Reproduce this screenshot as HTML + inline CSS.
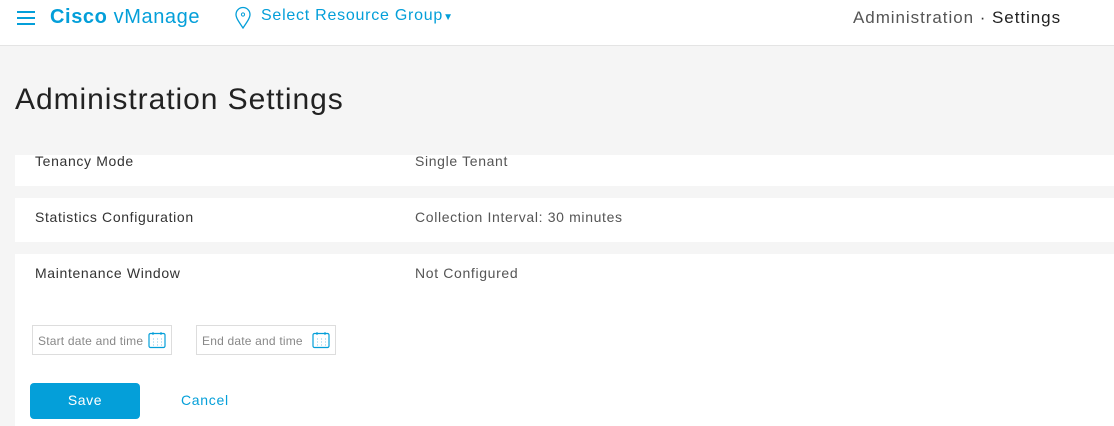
<!DOCTYPE html>
<html><head><style>
*{margin:0;padding:0;box-sizing:border-box}
body{width:1114px;height:426px;overflow:hidden;background:#f5f5f5;font-family:"Liberation Sans",sans-serif;position:relative}
.hdr{position:absolute;left:0;top:0;width:1114px;height:46px;background:#fff;border-bottom:1px solid #e4e4e4}
.a{position:absolute;white-space:nowrap}
.card{position:absolute;left:15px;width:1099px;background:#fff}
.lbl{font-size:14px;color:#333;letter-spacing:0.65px}
.inp{position:absolute;top:325px;width:140px;height:30px;border:1px solid #ddd;background:#fff;font-size:12px;color:#888;padding:8px 0 0 5px;letter-spacing:0.2px}
</style></head><body>
<div class="hdr">
<div class="a" style="left:17px;top:11px;width:18px"><div style="height:2px;background:#049fd9;margin-bottom:4px"></div><div style="height:2px;background:#049fd9;margin-bottom:4px"></div><div style="height:2px;background:#049fd9"></div></div>
<div class="a" style="left:50px;top:6px;font-size:20px;color:#049fd9;letter-spacing:0.6px"><b>Cisco</b> vManage</div>
<svg class="a" style="left:234px;top:6px" width="18" height="24" viewBox="0 0 18 24"><path d="M9 22C5 16 2 12 2 8.5A7 7 0 0 1 16 8.5C16 12 13 16 9 22Z" fill="none" stroke="#049fd9" stroke-width="1.3"/><circle cx="9" cy="8.5" r="1.6" fill="none" stroke="#049fd9" stroke-width="1"/></svg>
<div class="a" style="left:261px;top:7px;font-size:16px;color:#049fd9;letter-spacing:0.75px">Select Resource Group<span style="font-size:10px">▼</span></div>
<div class="a" style="left:853px;top:8px;font-size:17px;color:#555;letter-spacing:0.95px">Administration <span style="color:#333">·</span> <span style="color:#222">Settings</span></div>
</div>
<div class="a" style="left:15px;top:83px;font-size:30px;color:#222;letter-spacing:0.95px">Administration Settings</div>
<div class="card" style="top:155px;height:31px"></div>
<div class="card" style="top:198px;height:44px"></div>
<div class="card" style="top:254px;height:172px"></div>
<div class="a lbl" style="left:35px;top:153px">Tenancy Mode</div>
<div class="a lbl" style="left:415px;top:153px;color:#555">Single Tenant</div>
<div class="a lbl" style="left:35px;top:209px">Statistics Configuration</div>
<div class="a lbl" style="left:415px;top:209px;color:#555">Collection Interval: 30 minutes</div>
<div class="a lbl" style="left:35px;top:265px">Maintenance Window</div>
<div class="a lbl" style="left:415px;top:265px;color:#555">Not Configured</div>
<div class="inp" style="left:32px">Start date and time</div>
<div class="inp" style="left:196px">End date and time</div>
<svg class="a" style="left:148px;top:331px" width="18" height="18"><rect x="1" y="2.5" width="16" height="14" rx="1.5" fill="none" stroke="#049fd9" stroke-width="1.2"/><path d="M5 1v3M13 1v3" stroke="#049fd9"/><path d="M5 8h1M9 8h1M13 8h1M5 11h1M9 11h1M13 11h1M5 14h1M9 14h1M13 14h1" stroke="#7cc9ea"/></svg>
<svg class="a" style="left:312px;top:331px" width="18" height="18"><rect x="1" y="2.5" width="16" height="14" rx="1.5" fill="none" stroke="#049fd9" stroke-width="1.2"/><path d="M5 1v3M13 1v3" stroke="#049fd9"/><path d="M5 8h1M9 8h1M13 8h1M5 11h1M9 11h1M13 11h1M5 14h1M9 14h1M13 14h1" stroke="#7cc9ea"/></svg>
<div class="a" style="left:30px;top:383px;width:110px;height:36px;background:#049fd9;border-radius:4px;color:#fff;font-size:14px;text-align:center;line-height:35px;letter-spacing:0.6px">Save</div>
<div class="a" style="left:181px;top:392px;font-size:14px;color:#049fd9;letter-spacing:0.7px">Cancel</div>
</body></html>
